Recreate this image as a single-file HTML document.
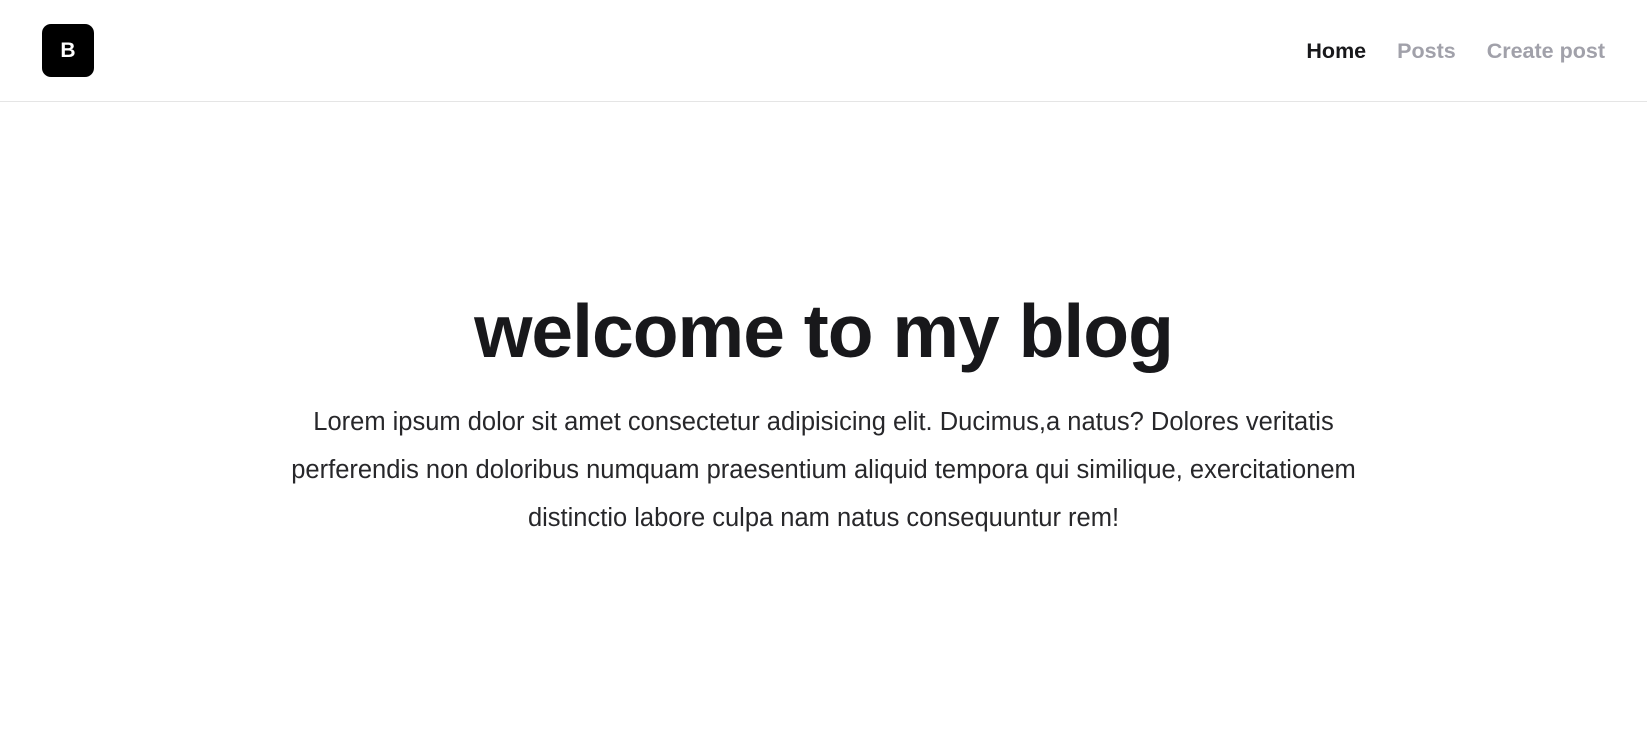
<!DOCTYPE html>
<html><head><meta charset="utf-8"><style>
*{margin:0;padding:0;box-sizing:border-box}
body{width:1647px;height:756px;background:#fff;font-family:"Liberation Sans",Arial,sans-serif;color:#18181b;overflow:hidden}
header{height:102px;border-bottom:1px solid #e5e5e5;position:relative}
.logo{position:absolute;left:42px;top:24px;width:52px;height:53px;background:#000;border-radius:9px;color:#fff;font-weight:bold;font-size:21px;display:flex;align-items:center;justify-content:center}
nav{position:absolute;right:42px;top:39px;display:flex;gap:31px;font-weight:bold;font-size:21.5px}
nav span{color:#a1a1aa}
nav span.a{color:#18181b}
h1{position:absolute;left:0;right:0;top:285px;text-align:center;font-size:75px;font-weight:bold;letter-spacing:-1px;line-height:92px}
p{position:absolute;left:0;right:0;top:398px;text-align:center;font-size:25.5px;line-height:48px;white-space:nowrap;color:#27272a}
</style></head><body>
<header><div class="logo">B</div>
<nav><span class="a">Home</span><span>Posts</span><span>Create post</span></nav></header>
<h1>welcome to my blog</h1>
<p>Lorem ipsum dolor sit amet consectetur adipisicing elit. Ducimus,a natus? Dolores veritatis<br>perferendis non doloribus numquam praesentium aliquid tempora qui similique, exercitationem<br>distinctio labore culpa nam natus consequuntur rem!</p>
</body></html>
